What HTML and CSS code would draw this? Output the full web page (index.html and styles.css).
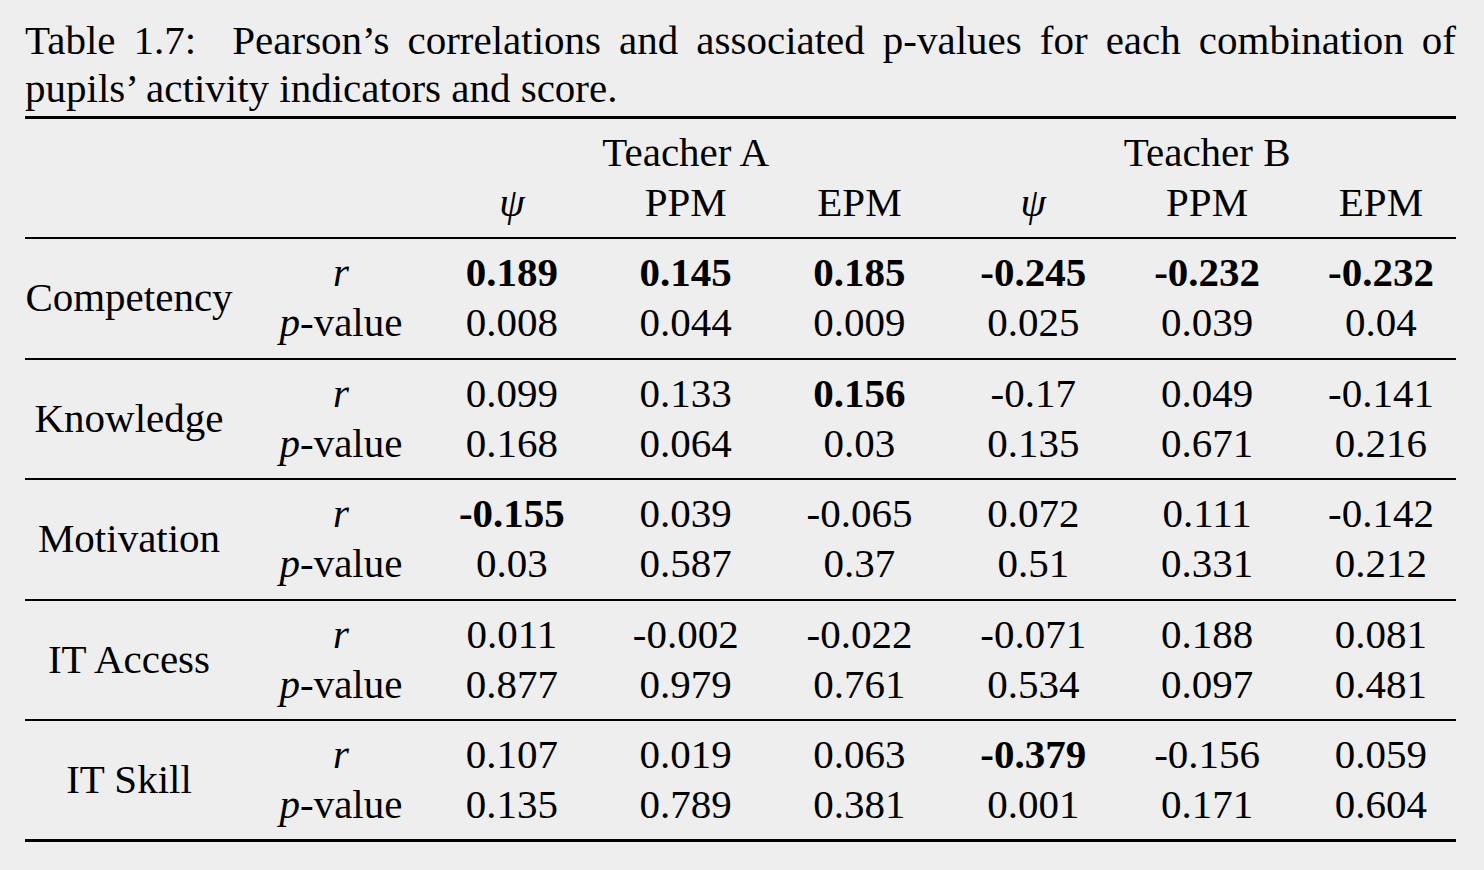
FILE: index.html
```html
<!DOCTYPE html>
<html lang="en">
<head>
<meta charset="utf-8">
<title>Table 1.7</title>
<link rel="stylesheet" href="styles.css">
</head>
<body>
<div class="page">
  <p class="caption">Table 1.7:&nbsp; Pearson’s correlations and associated p-values for each combination of pupils’ activity indicators and score.</p>
  <div class="table">
    <div class="grid head">
      <div class="cell"></div><div class="cell c2"></div>
      <div class="cell span3">Teacher A</div>
      <div class="cell span3 last">Teacher B</div>
      <div class="cell"></div><div class="cell c2"></div>
      <div class="cell"><i>ψ</i></div><div class="cell">PPM</div><div class="cell">EPM</div>
      <div class="cell"><i>ψ</i></div><div class="cell">PPM</div><div class="cell last">EPM</div>
    </div>

    <div class="grid group">
      <div class="cell label">Competency</div>
      <div class="cell c2"><i>r</i></div>
      <div class="cell"><b>0.189</b></div><div class="cell"><b>0.145</b></div><div class="cell"><b>0.185</b></div>
      <div class="cell"><b>-0.245</b></div><div class="cell"><b>-0.232</b></div><div class="cell last"><b>-0.232</b></div>
      <div class="cell c2"><i>p</i>-value</div>
      <div class="cell">0.008</div><div class="cell">0.044</div><div class="cell">0.009</div>
      <div class="cell">0.025</div><div class="cell">0.039</div><div class="cell last">0.04</div>
    </div>

    <div class="grid group">
      <div class="cell label">Knowledge</div>
      <div class="cell c2"><i>r</i></div>
      <div class="cell">0.099</div><div class="cell">0.133</div><div class="cell"><b>0.156</b></div>
      <div class="cell">-0.17</div><div class="cell">0.049</div><div class="cell last">-0.141</div>
      <div class="cell c2"><i>p</i>-value</div>
      <div class="cell">0.168</div><div class="cell">0.064</div><div class="cell">0.03</div>
      <div class="cell">0.135</div><div class="cell">0.671</div><div class="cell last">0.216</div>
    </div>

    <div class="grid group">
      <div class="cell label">Motivation</div>
      <div class="cell c2"><i>r</i></div>
      <div class="cell"><b>-0.155</b></div><div class="cell">0.039</div><div class="cell">-0.065</div>
      <div class="cell">0.072</div><div class="cell">0.111</div><div class="cell last">-0.142</div>
      <div class="cell c2"><i>p</i>-value</div>
      <div class="cell">0.03</div><div class="cell">0.587</div><div class="cell">0.37</div>
      <div class="cell">0.51</div><div class="cell">0.331</div><div class="cell last">0.212</div>
    </div>

    <div class="grid group">
      <div class="cell label">IT Access</div>
      <div class="cell c2"><i>r</i></div>
      <div class="cell">0.011</div><div class="cell">-0.002</div><div class="cell">-0.022</div>
      <div class="cell">-0.071</div><div class="cell">0.188</div><div class="cell last">0.081</div>
      <div class="cell c2"><i>p</i>-value</div>
      <div class="cell">0.877</div><div class="cell">0.979</div><div class="cell">0.761</div>
      <div class="cell">0.534</div><div class="cell">0.097</div><div class="cell last">0.481</div>
    </div>

    <div class="grid group lastgroup">
      <div class="cell label">IT Skill</div>
      <div class="cell c2"><i>r</i></div>
      <div class="cell">0.107</div><div class="cell">0.019</div><div class="cell">0.063</div>
      <div class="cell"><b>-0.379</b></div><div class="cell">-0.156</div><div class="cell last">0.059</div>
      <div class="cell c2"><i>p</i>-value</div>
      <div class="cell">0.135</div><div class="cell">0.789</div><div class="cell">0.381</div>
      <div class="cell">0.001</div><div class="cell">0.171</div><div class="cell last">0.604</div>
    </div>
  </div>
</div>
</body>
</html>
```

FILE: styles.css
```css
html, body {
  margin: 0;
  padding: 0;
  background: #eeeeee;
}

body {
  font-family: "Liberation Serif", "Times New Roman", serif;
  color: #000;
  font-size: 41px;
}

.page {
  width: 1431px;
  padding: 16px 0 0 25px;
}

.caption {
  margin: 0;
  line-height: 48px;
  text-align: justify;
}

.table {
  margin-top: 4px;
  border-top: 3px solid #000;
  border-bottom: 3px solid #000;
}

.grid {
  display: grid;
  grid-template-columns: 208px 192px repeat(5, 173.8px) 162px;
  grid-auto-rows: 50px;
  line-height: 50px;
  padding: 8px 0 10.5px;
}

.head {
  border-bottom: 2px solid #000;
  padding-bottom: 10px;
}

.group {
  border-bottom: 2px solid #000;
}

.group.lastgroup {
  border-bottom: none;
  padding-bottom: 10px;
}

.cell {
  text-align: center;
  white-space: nowrap;
}

.c2 {
  grid-column: 2;
  padding-left: 24px;
}

.last {
  padding-left: 12px;
}

.span3 {
  grid-column: span 3;
}

.label {
  grid-column: 1;
  grid-row: span 2;
  align-self: center;
}

i {
  font-style: italic;
}

b {
  font-weight: bold;
}
```
